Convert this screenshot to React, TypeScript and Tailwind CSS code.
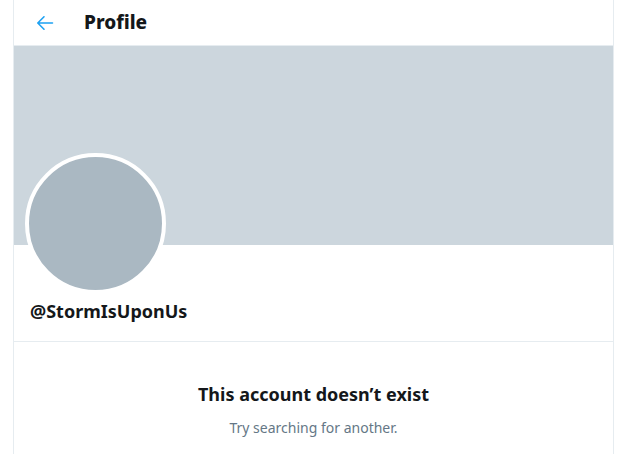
import React from "react";

export default function App() {
  return (
    <div
      className="w-[634px] h-[454px] bg-white overflow-hidden"
      style={{ fontFamily: '"Noto Sans", "Open Sans", sans-serif' }}
    >
      <div className="ml-[13px] w-[601px] h-full border-x border-[#e6ecf0] flex flex-col">
        <div className="h-[46px] flex items-center border-b border-[#e6ecf0] shrink-0">
          <div className="w-[70px] pl-[22px] flex items-center">
            <svg width="18" height="18" viewBox="0 0 18 18" className="text-[#1da1f2]">
              <path
                d="M16.5 9H2 M8 2.8 L1.8 9 L8 15.2"
                fill="none"
                stroke="currentColor"
                strokeWidth="1.6"
                strokeLinecap="round"
                strokeLinejoin="round"
              />
            </svg>
          </div>
          <span className="text-[19px] font-extrabold text-[#14171a] leading-none">Profile</span>
        </div>
        <div className="h-[199px] bg-[#ccd6dd] shrink-0" />
        <div className="px-[11px] border-b border-[#e6ecf0] pb-[18px]">
          <div className="-mt-[92px] w-[141px] h-[141px] rounded-full border-4 border-white bg-[#aab8c2]" />
          <div className="mt-[5px] pl-[5px] text-[18px] font-bold text-[#14171a] leading-[24px]">
            @StormIsUponUs
          </div>
        </div>
        <div className="flex flex-col items-center pt-[40px]">
          <div className="text-[18px] font-bold text-[#14171a] leading-[24px]">
            This account doesn’t exist
          </div>
          <div className="mt-[12px] text-[14px] text-[#657786] leading-[20px]">
            Try searching for another.
          </div>
        </div>
      </div>
    </div>
  );
}
